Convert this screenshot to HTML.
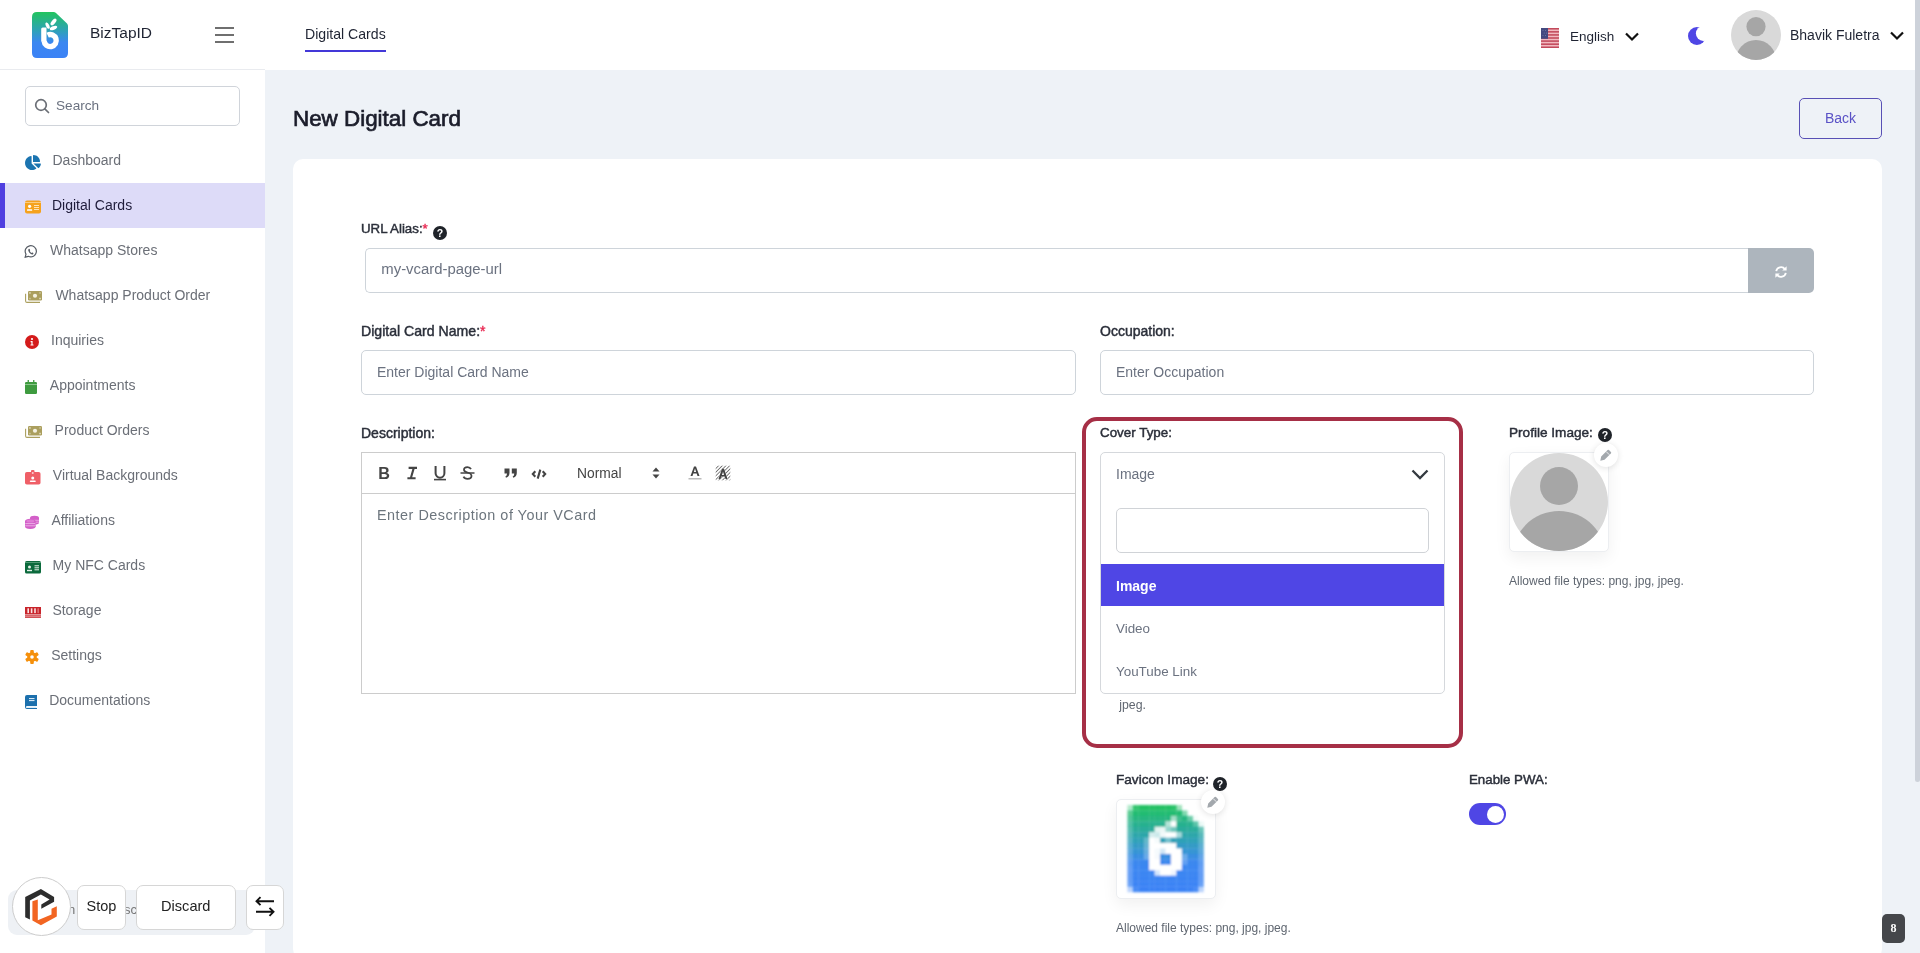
<!DOCTYPE html>
<html><head><meta charset="utf-8">
<style>
*{box-sizing:border-box;margin:0;padding:0}
html,body{width:1920px;height:953px;overflow:hidden;background:#eef2f7;font-family:"Liberation Sans",sans-serif;position:relative}
.a{position:absolute}
.t{position:absolute;line-height:1;white-space:nowrap}
#hdr{left:0;top:0;width:1920px;height:70px;background:#fff}
#side{left:0;top:70px;width:265px;height:883px;background:#fff}
#sideline{left:0;top:69px;width:265px;height:1px;background:#e9ebef}
.nav{font-size:14px;color:#6b6f77}
.lbl{font-size:13.8px;color:#2b2f3a;-webkit-text-stroke:0.45px #2b2f3a}
.inp{position:absolute;background:#fff;border:1px solid #ced4da;border-radius:5px}
.ph{font-size:14px;color:#6b7280}
.q{position:absolute;width:14px;height:14px;border-radius:50%;background:#1f2329}
.q:after{content:"?";position:absolute;left:0;top:1.5px;width:14px;text-align:center;color:#fff;font-weight:bold;font-size:10.5px;line-height:1}
</style></head><body><div id="wrap" style="position:absolute;left:0;top:0;width:1920px;height:953px;will-change:transform;opacity:0.999">
<!-- header -->
<div id="hdr" class="a"></div>
<div id="side" class="a"></div>
<div id="sideline" class="a"></div>

<!-- logo -->
<svg class="a" style="left:32px;top:12px" width="36" height="46" viewBox="0 0 36 46">
<defs><linearGradient id="lg" x1="0" y1="0" x2="0" y2="1"><stop offset="0" stop-color="#22c45e"/><stop offset="0.4" stop-color="#2ea2b6"/><stop offset="0.66" stop-color="#3b87f1"/><stop offset="1" stop-color="#3b82f6"/></linearGradient></defs>
<path d="M5 0H21.5Q23 0 24 1L35 11.5Q36 12.5 36 14V41Q36 46 31 46H5Q0 46 0 41V5Q0 0 5 0Z" fill="url(#lg)"/>
<path d="M15.6 23.1A6.05 6.05 0 1 1 12.15 29" fill="none" stroke="#fff" stroke-width="5.4"/>
<path d="M9.2 17Q9.2 15.5 10.7 15.5H14.5V29.5H9.2Z" fill="#fff"/>
<ellipse cx="15.6" cy="13.6" rx="1.7" ry="3.4" fill="#fff" transform="rotate(-25 15.6 13.6)"/>
<ellipse cx="21.5" cy="10" rx="1.9" ry="4" fill="#fff" transform="rotate(40 21.5 10)"/>
<ellipse cx="21.5" cy="16" rx="1.8" ry="3.9" fill="#fff" transform="rotate(68 21.5 16)"/>
</svg>
<div class="t" style="left:90px;top:24.7px;font-size:15.5px;color:#1f2433">BizTapID</div>
<!-- hamburger -->
<div class="a" style="left:215px;top:27px;width:19px;height:2px;background:#6f6f6f"></div>
<div class="a" style="left:215px;top:34px;width:19px;height:2px;background:#6f6f6f"></div>
<div class="a" style="left:215px;top:41px;width:19px;height:2px;background:#6f6f6f"></div>
<!-- tab -->
<div class="t" style="left:305px;top:26.8px;font-size:14.1px;color:#1f2433">Digital Cards</div>
<div class="a" style="left:305px;top:50px;width:81px;height:2px;background:#4338d8"></div>

<!-- header right -->
<svg class="a" style="left:1541px;top:28px" width="18" height="20" viewBox="0 0 18 20"><rect width="18" height="20" fill="#f1b9c0"/><rect y="0.00" width="18" height="1.54" fill="#c24a5c"/><rect y="3.08" width="18" height="1.54" fill="#c24a5c"/><rect y="6.16" width="18" height="1.54" fill="#c24a5c"/><rect y="9.24" width="18" height="1.54" fill="#c24a5c"/><rect y="12.32" width="18" height="1.54" fill="#c24a5c"/><rect y="15.40" width="18" height="1.54" fill="#c24a5c"/><rect y="18.48" width="18" height="1.54" fill="#c24a5c"/><rect width="7" height="10.8" fill="#444a80"/><g fill="#9aa0c8" opacity=".6"><circle cx="2" cy="2.5" r=".5"/><circle cx="4.5" cy="2.5" r=".5"/><circle cx="3.2" cy="5" r=".5"/><circle cx="5.5" cy="5" r=".5"/><circle cx="2" cy="7.5" r=".5"/><circle cx="4.5" cy="7.5" r=".5"/></g></svg>
<div class="t" style="left:1570px;top:29.6px;font-size:13.5px;color:#1f2433">English</div>
<svg class="a" style="left:1624px;top:31px" width="16" height="11" viewBox="0 0 16 11"><path d="M2 2.5L8 8.5L14 2.5" fill="none" stroke="#111" stroke-width="2.2"/></svg>
<svg class="a" style="left:1686px;top:26px" width="20" height="20" viewBox="0 0 20 20"><mask id="mm"><rect width="20" height="20" fill="#fff"/><circle cx="17.3" cy="7.6" r="7.4" fill="#000"/></mask><circle cx="10.9" cy="10" r="8.9" fill="#4f46e5" mask="url(#mm)"/></svg>
<svg class="a" style="left:1731px;top:10px" width="50" height="50" viewBox="0 0 50 50">
<clipPath id="ac"><circle cx="25" cy="25" r="25"/></clipPath>
<circle cx="25" cy="25" r="25" fill="#d9d9d9"/>
<g clip-path="url(#ac)" fill="#a6a6a6"><circle cx="25" cy="16.6" r="9.6"/><ellipse cx="25" cy="51" rx="20.5" ry="21"/></g>
</svg>
<div class="t" style="left:1790px;top:27.9px;font-size:14px;color:#1f2433">Bhavik Fuletra</div>
<svg class="a" style="left:1889px;top:30px" width="16" height="11" viewBox="0 0 16 11"><path d="M2 2.5L8 8.5L14 2.5" fill="none" stroke="#111" stroke-width="2.2"/></svg>

<!-- scrollbar -->
<div class="a" style="left:1915px;top:0;width:5px;height:782px;background:#cdd2da;border-radius:0 0 3px 3px"></div>

<!-- sidebar search -->
<div class="inp" style="left:25px;top:86px;width:215px;height:40px;border-color:#d0d4da"></div>
<svg class="a" style="left:34px;top:98px" width="16" height="16" viewBox="0 0 16 16"><circle cx="7" cy="7" r="5.3" fill="none" stroke="#6b6f76" stroke-width="1.7"/><path d="M10.8 10.8L14.5 14.5" stroke="#6b6f76" stroke-width="1.7" stroke-linecap="round"/></svg>
<div class="t" style="left:56px;top:99.4px;font-size:13.6px;color:#6b7280">Search</div>

<!-- active item -->
<div class="a" style="left:0;top:183px;width:265px;height:45px;background:#dddbf8"></div>
<div class="a" style="left:0;top:183px;width:5px;height:45px;background:#4f3fe0"></div>

<div class="t nav" style="left:52.5px;top:152.95px">Dashboard</div>
<div class="t nav" style="left:52.0px;top:197.95px;color:#1e1b3a">Digital Cards</div>
<div class="t nav" style="left:50.0px;top:242.95px">Whatsapp Stores</div>
<div class="t nav" style="left:55.4px;top:287.95px">Whatsapp Product Order</div>
<div class="t nav" style="left:51.0px;top:332.95px">Inquiries</div>
<div class="t nav" style="left:49.8px;top:377.95px">Appointments</div>
<div class="t nav" style="left:54.6px;top:422.95px">Product Orders</div>
<div class="t nav" style="left:52.8px;top:467.95px">Virtual Backgrounds</div>
<div class="t nav" style="left:51.4px;top:512.95px">Affiliations</div>
<div class="t nav" style="left:52.6px;top:557.95px">My NFC Cards</div>
<div class="t nav" style="left:52.4px;top:602.95px">Storage</div>
<div class="t nav" style="left:51.2px;top:647.95px">Settings</div>
<div class="t nav" style="left:49.2px;top:692.95px">Documentations</div>
<svg class="a" style="left:25px;top:154.5px" width="16" height="15" viewBox="32 0 544 512"><path d="M304 240V16.6c0-9 7-16.6 16-16.6C443.7 0 544 100.3 544 224c0 9-7.6 16-16.6 16H304zM32 272C32 150.7 122.1 50.3 239 34.3c9.2-1.3 17 6.1 17 15.4V288L412.5 444.5c6.7 6.7 6.2 17.700-1.5 23.1C371.8 495.6 323.8 512 272 512C139.5 512 32 404.6 32 272zm526.4 16c9.3 0 16.6 7.8 15.4 17c-7.7 55.9-34.6 105.6-73.9 142.3c-6 5.6-15.400 5.2-21.2-.7L320 288H558.4z" fill="#1b74b0"/></svg>
<svg class="a" style="left:25px;top:200px" width="16" height="14" viewBox="0 0 16 14"><rect x="0" y="0.5" width="16" height="13" rx="2" fill="#f5a21d"/><rect x="0" y="2.2" width="16" height="0.8" fill="#fcd79a"/><circle cx="4.6" cy="6.3" r="1.6" fill="#fff"/><rect x="2" y="9.2" width="5.2" height="1.6" rx="0.6" fill="#fff"/><rect x="9" y="5" width="5" height="1" fill="#fde3b8"/><rect x="9" y="7" width="5" height="1" fill="#fde3b8"/><rect x="9" y="9" width="5" height="1" fill="#fde3b8"/></svg>
<svg class="a" style="left:23.8px;top:245px" width="13" height="13" viewBox="0 0 13 13"><path d="M1.2 12.2L2 9.2A5.6 5.6 0 1 1 4.3 11.3Z" fill="none" stroke="#555b63" stroke-width="1.2"/><path d="M4.4 4.2Q5 3.4 5.6 4.1L6.1 5Q6.3 5.5 5.8 5.9Q6.4 7.3 7.6 7.9Q8 7.4 8.5 7.6L9.3 8.1Q9.7 8.6 9 9.2Q7.5 10 5.4 7.8Q3.6 5.6 4.4 4.2Z" fill="#555b63"/></svg>
<svg class="a" style="left:25px;top:291px" width="17" height="12" viewBox="0 0 17 12"><rect x="3" y="0" width="14" height="9.5" rx="1.2" fill="#ab9f5e"/><circle cx="10" cy="4.75" r="2.1" fill="#f4f1e2"/><rect x="4.2" y="1.2" width="1.5" height="1.5" fill="#f4f1e2" opacity=".8"/><rect x="14.3" y="6.8" width="1.5" height="1.5" fill="#f4f1e2" opacity=".8"/><rect x="14.3" y="1.2" width="1.5" height="1.5" fill="#f4f1e2" opacity=".5"/><rect x="4.2" y="6.8" width="1.5" height="1.5" fill="#f4f1e2" opacity=".5"/><path d="M0.6 2.8V10Q0.6 11.4 2 11.4H15" fill="none" stroke="#ab9f5e" stroke-width="1.1"/></svg>
<svg class="a" style="left:25px;top:335px" width="14" height="14" viewBox="0 0 14 14"><circle cx="7" cy="7" r="7" fill="#d41b1b"/><circle cx="7" cy="4" r="1.1" fill="#fff"/><path d="M5.6 6H7.6V9.4H8.5V10.6H5.5V9.4H6.4V7.2H5.6Z" fill="#fff"/></svg>
<svg class="a" style="left:25px;top:380px" width="12" height="14" viewBox="0 0 12 14"><rect x="0" y="2" width="12" height="12" rx="1.2" fill="#3e9b3f"/><rect x="2.6" y="0" width="1.3" height="3" fill="#3e9b3f"/><rect x="8.1" y="0" width="1.3" height="3" fill="#3e9b3f"/><rect x="0" y="4.2" width="12" height="0.8" fill="#9ed29e"/></svg>
<svg class="a" style="left:25px;top:426px" width="17" height="12" viewBox="0 0 17 12"><rect x="3" y="0" width="14" height="9.5" rx="1.2" fill="#ab9f5e"/><circle cx="10" cy="4.75" r="2.1" fill="#f4f1e2"/><rect x="4.2" y="1.2" width="1.5" height="1.5" fill="#f4f1e2" opacity=".8"/><rect x="14.3" y="6.8" width="1.5" height="1.5" fill="#f4f1e2" opacity=".8"/><rect x="14.3" y="1.2" width="1.5" height="1.5" fill="#f4f1e2" opacity=".5"/><rect x="4.2" y="6.8" width="1.5" height="1.5" fill="#f4f1e2" opacity=".5"/><path d="M0.6 2.8V10Q0.6 11.4 2 11.4H15" fill="none" stroke="#ab9f5e" stroke-width="1.1"/></svg>
<svg class="a" style="left:25px;top:469.5px" width="16" height="15" viewBox="0 0 16 15"><rect x="0" y="2" width="15.5" height="12.5" rx="1.8" fill="#ef5f67"/><rect x="6" y="0" width="3.5" height="4" rx="1" fill="#ef5f67"/><circle cx="7.75" cy="3" r="1" fill="#fbd0d3"/><circle cx="7.75" cy="8" r="1.5" fill="#fff"/><rect x="4.8" y="10.5" width="6" height="1.6" rx="0.8" fill="#fff"/></svg>
<svg class="a" style="left:25px;top:514.5px" width="15" height="14" viewBox="0 0 15 14"><g fill="#d35fc8"><ellipse cx="9.5" cy="3" rx="4.5" ry="2.3"/><rect x="5" y="3" width="9" height="4.5"/><ellipse cx="9.5" cy="7.5" rx="4.5" ry="2"/></g><path d="M6 5.3H14M6 7.2H14" stroke="#f7d0f2" stroke-width=".6"/><g fill="#d35fc8"><ellipse cx="5.3" cy="6.2" rx="5.3" ry="2.5"/><rect x="0" y="6.2" width="10.6" height="5.5"/><ellipse cx="5.3" cy="11.6" rx="5.3" ry="2.3"/></g><path d="M0.3 8.6H10.3M0.3 10.8H10.3" stroke="#f7d0f2" stroke-width=".7"/><ellipse cx="5.3" cy="6" rx="4" ry="1.6" fill="#e07bd6"/></svg>
<svg class="a" style="left:25px;top:560.5px" width="16" height="13" viewBox="0 0 16 13"><rect x="0" y="0" width="16" height="12.5" rx="1.6" fill="#0b6a3c"/><rect x="0" y="1.3" width="16" height=".7" fill="#6fb08e"/><circle cx="4.5" cy="6" r="1.5" fill="#e6f2ea"/><rect x="2" y="8.8" width="5" height="1.4" fill="#e6f2ea"/><rect x="9.5" y="4.3" width="4.5" height="1" fill="#e6f2ea"/><rect x="9.5" y="6.3" width="4.5" height="1" fill="#e6f2ea"/><rect x="9.5" y="8.3" width="4.5" height="1" fill="#e6f2ea"/></svg>
<svg class="a" style="left:25px;top:606.5px" width="16" height="11" viewBox="0 0 16 11"><rect x="0" y="0" width="16" height="7.5" fill="#c8242b"/><rect x="0" y="8.3" width="16" height="1.2" fill="#c8242b"/><rect x="0" y="9.8" width="16" height="1.2" fill="#c8242b" opacity=".8"/><rect x="2.4" y="1.3" width="1.6" height="4.8" fill="#fbe3e3"/><rect x="5.8" y="1.3" width="1.6" height="4.8" fill="#fbe3e3"/><rect x="9.2" y="1.3" width="1.6" height="4.8" fill="#fbe3e3"/><rect x="12.4" y="1.3" width="1.6" height="4.8" fill="#fbe3e3" opacity=".4"/></svg>
<svg class="a" style="left:25px;top:650px" width="14" height="14" viewBox="0 0 14 14"><g fill="#f5900c" transform="translate(7 7)"><rect x="-1.8" y="-7" width="3.6" height="4" rx="1" transform="rotate(0)"/><rect x="-1.8" y="-7" width="3.6" height="4" rx="1" transform="rotate(60)"/><rect x="-1.8" y="-7" width="3.6" height="4" rx="1" transform="rotate(120)"/><rect x="-1.8" y="-7" width="3.6" height="4" rx="1" transform="rotate(180)"/><rect x="-1.8" y="-7" width="3.6" height="4" rx="1" transform="rotate(240)"/><rect x="-1.8" y="-7" width="3.6" height="4" rx="1" transform="rotate(300)"/><circle r="4.8"/></g><circle cx="7" cy="7" r="1.8" fill="#fff"/></svg>
<svg class="a" style="left:25px;top:695px" width="12" height="14" viewBox="0 0 12 14"><path d="M2 0H12V11H2.2Q1 11 1 12.2Q1 13 2 13H12V14H2Q0 14 0 12V2Q0 0 2 0Z" fill="#1c70ad"/><rect x="4" y="3" width="5.5" height="1.1" fill="#d6e8f5"/><rect x="4" y="5" width="5.5" height="1.1" fill="#d6e8f5"/><rect x="1.5" y="11.6" width="10" height="1.2" fill="#d6e8f5"/></svg>

<!-- page title -->
<div class="t" style="left:293px;top:108.2px;font-size:22.4px;color:#1b1d2b;-webkit-text-stroke:0.7px #1b1d2b">New Digital Card</div>
<div class="a" style="left:1799px;top:98px;width:83px;height:41px;border:1.5px solid #5850b5;border-radius:5px"></div>
<div class="t" style="left:1825px;top:111.4px;font-size:14px;color:#5a52c6">Back</div>

<!-- card -->
<div class="a" style="left:293px;top:159px;width:1589px;height:800px;background:#fff;border-radius:10px"></div>

<!-- URL alias -->
<div class="t lbl" style="left:361px;top:222.1px;font-size:13.3px">URL Alias:<span style="color:#e8254f;-webkit-text-stroke:0.35px #e8254f">*</span></div>
<div class="q" style="left:433px;top:226px"></div>
<div class="inp" style="left:365px;top:248px;width:1385px;height:45px;border-radius:5px 0 0 5px;border-right:none"></div>
<div class="t ph" style="left:381.3px;top:262.2px;font-size:14.9px">my-vcard-page-url</div>
<div class="a" style="left:1748px;top:248px;width:66px;height:45px;background:#adb5bd;border-radius:0 5px 5px 0"></div>
<svg class="a" style="left:1774px;top:265px" width="14" height="14" viewBox="0 0 14 14"><path d="M2.2 6.2A4.9 4.9 0 0 1 11 4.2" fill="none" stroke="#fff" stroke-width="1.8"/><path d="M12.6 1.2V5.6H8.2Z" fill="#fff"/><path d="M11.8 7.8A4.9 4.9 0 0 1 3 9.8" fill="none" stroke="#fff" stroke-width="1.8"/><path d="M1.4 12.8V8.4H5.8Z" fill="#fff"/></svg>

<!-- name / occupation -->
<div class="t lbl" style="left:361px;top:323.5px;font-size:14.1px">Digital Card Name:<span style="color:#e8254f;-webkit-text-stroke:0.35px #e8254f">*</span></div>
<div class="inp" style="left:361px;top:350px;width:715px;height:45px"></div>
<div class="t ph" style="left:377px;top:365.2px">Enter Digital Card Name</div>
<div class="t lbl" style="left:1100px;top:323.9px;font-size:14px">Occupation:</div>
<div class="inp" style="left:1100px;top:350px;width:714px;height:45px"></div>
<div class="t ph" style="left:1116px;top:365.2px">Enter Occupation</div>

<!-- description -->
<div class="t lbl" style="left:361px;top:426.1px;font-size:14px">Description:</div>
<div class="a" style="left:361px;top:452px;width:715px;height:242px;border:1px solid #ccc"></div>
<div class="a" style="left:362px;top:493px;width:713px;height:1px;background:#ccc"></div>
<!-- toolbar icons -->
<div class="t" style="left:378.3px;top:465.3px;font-size:16.2px;font-weight:bold;color:#444">B</div>
<svg class="a" style="left:405px;top:466px" width="13" height="14" viewBox="0 0 13 14"><path d="M3.6 1.9H12M2.4 12.2H10.6M8.8 1.9L5.8 12.2" fill="none" stroke="#444" stroke-width="2.1"/></svg>
<svg class="a" style="left:433px;top:465px" width="14" height="16" viewBox="0 0 14 16"><path d="M2.6 1V8.3A4.4 4.4 0 0 0 11.4 8.3V1" fill="none" stroke="#444" stroke-width="2"/><path d="M1 14.6H13" stroke="#444" stroke-width="1.6"/></svg>
<svg class="a" style="left:460px;top:466px" width="15" height="14" viewBox="0 0 15 14"><path d="M11 3.2Q10 1.2 7.5 1.2Q4 1.2 4 3.8Q4 5.6 7.5 6.5Q11.5 7.5 11.5 10Q11.5 12.8 7.5 12.8Q4.5 12.8 3.5 10.6" fill="none" stroke="#444" stroke-width="1.8"/><path d="M0.5 7H14.5" stroke="#444" stroke-width="1.5"/></svg>
<svg class="a" style="left:504px;top:468px" width="14" height="10" viewBox="0 0 14 10"><path d="M0.5 0.5H5.5V5Q5.5 8.5 2 9.8L1.4 8.6Q3 7.8 3 5.5H0.5Z" fill="#444"/><path d="M7.8 0.5H12.8V5Q12.8 8.5 9.3 9.8L8.7 8.6Q10.3 7.8 10.3 5.5H7.8Z" fill="#444"/></svg>
<svg class="a" style="left:531px;top:469px" width="16" height="10" viewBox="0 0 16 10"><path d="M4.3 2.2L1.8 5L4.3 7.8M11.7 2.2L14.2 5L11.7 7.8M9.3 0.6L6.7 9.6" fill="none" stroke="#444" stroke-width="2.1"/></svg>
<div class="t" style="left:577px;top:467.3px;font-size:13.8px;color:#444">Normal</div>
<svg class="a" style="left:652px;top:467px" width="8" height="12" viewBox="0 0 8 12"><path d="M4 0.5L7.5 4.5H0.5Z M4 11.5L7.5 7.5H0.5Z" fill="#444"/></svg>
<svg class="a" style="left:687px;top:465px" width="16" height="16" viewBox="0 0 16 16"><path d="M3.5 11L7 1.5H9L12.5 11H10.5L9.7 8.6H6.3L5.5 11Z M6.9 6.9H9.1L8 3.6Z" fill="#444"/><rect x="1.5" y="13" width="13" height="1.5" fill="#bbb"/></svg>
<svg class="a" style="left:715px;top:465px" width="16" height="16" viewBox="0 0 16 16"><defs><pattern id="hp" width="2.6" height="2.6" patternUnits="userSpaceOnUse" patternTransform="rotate(45)"><rect width="0.8" height="2.6" fill="#666"/></pattern></defs><rect x="0.7" y="0.7" width="14.6" height="14.6" fill="url(#hp)"/><path d="M3.5 14L7 3.5H9L12.5 14H10.5L9.7 11.6H6.3L5.5 14Z M6.9 9.9H9.1L8 6.6Z" fill="#444" stroke="#fff" stroke-width="0.6" paint-order="stroke"/></svg>
<div class="t" style="left:377px;top:507.8px;font-size:14.4px;color:#6c757d;letter-spacing:0.5px">Enter Description of Your VCard</div>

<!-- cover type highlight -->
<div class="a" style="left:1082px;top:417px;width:381px;height:331px;border:4px solid #a62f46;border-radius:15px"></div>
<div class="t lbl" style="left:1100px;top:425.9px;font-size:13.4px">Cover Type:</div>
<div class="a" style="left:1100px;top:452px;width:345px;height:242px;border:1px solid #d5d8dc;border-radius:5px;background:#fff"></div>
<div class="t ph" style="left:1116px;top:466.9px">Image</div>
<svg class="a" style="left:1410px;top:468px" width="20" height="13" viewBox="0 0 20 13"><path d="M2.5 2.5L10 10L17.5 2.5" fill="none" stroke="#343a40" stroke-width="2.3"/></svg>
<div class="a" style="left:1116px;top:508px;width:313px;height:45px;border:1px solid #d0d3d7;border-radius:5px"></div>
<div class="a" style="left:1101px;top:564px;width:343px;height:42px;background:#4f46e5"></div>
<div class="t" style="left:1116px;top:578.5px;font-size:14px;font-weight:bold;color:#fff">Image</div>
<div class="t ph" style="left:1116px;top:621.6px;font-size:13.4px">Video</div>
<div class="t ph" style="left:1116px;top:664.7px;font-size:13.4px">YouTube Link</div>
<div class="t" style="left:1119.3px;top:699.4px;font-size:12.3px;color:#5f6670">jpeg.</div>

<!-- profile image -->
<div class="t lbl" style="left:1509px;top:426.1px;font-size:13.6px">Profile Image:</div>
<div class="q" style="left:1598px;top:428px"></div>
<div class="a" style="left:1509px;top:452px;width:100px;height:100px;border:1px solid #eceef1;border-radius:5px;box-shadow:0 6px 16px rgba(0,0,0,0.06);background:#fff"></div>
<svg class="a" style="left:1510px;top:453px" width="98" height="98" viewBox="0 0 98 98"><clipPath id="pc"><circle cx="49" cy="49" r="49"/></clipPath><circle cx="49" cy="49" r="49" fill="#d9d9d9"/><g clip-path="url(#pc)" fill="#a6a6a6"><circle cx="49" cy="33" r="19"/><ellipse cx="49" cy="105" rx="47" ry="47"/></g></svg>
<div class="a" style="left:1594px;top:443px;width:24px;height:24px;border-radius:50%;background:#fff;box-shadow:0 1px 6px rgba(0,0,0,0.12)"></div>
<svg class="a" style="left:1599px;top:448px" width="14" height="14" viewBox="0 0 14 14"><path d="M1.3 12.7L2.2 8.5L8.6 2.1Q9.3 1.4 10 2.1L11.9 4Q12.6 4.7 11.9 5.4L5.5 11.8Z" fill="#a3a8ad"/><path d="M7.2 3.6L10.4 6.8" stroke="#fff" stroke-width="0.8"/></svg>
<div class="t" style="left:1509px;top:575.2px;font-size:12px;color:#5f6670">Allowed file types: png, jpg, jpeg.</div>

<!-- favicon -->
<div class="t lbl" style="left:1116px;top:772.9px;font-size:13.6px">Favicon Image:</div>
<div class="q" style="left:1213px;top:777px"></div>
<div class="a" style="left:1116px;top:799px;width:100px;height:100px;border:1px solid #eceef1;border-radius:5px;box-shadow:0 6px 16px rgba(0,0,0,0.06);background:#fff"></div>
<!--FAVS--><svg class="a" style="left:1122.4px;top:805.3px;overflow:visible" width="87" height="87" viewBox="0 0 87 87"><filter id="fb" x="-10%" y="-10%" width="120%" height="120%"><feGaussianBlur stdDeviation="0.8"/></filter><g filter="url(#fb)"><rect x="5.44" y="0.00" width="5.69" height="5.69" fill="#23c067" fill-opacity="0.35"/><rect x="10.88" y="0.00" width="5.69" height="5.69" fill="#22c164" fill-opacity="0.93"/><rect x="16.31" y="0.00" width="5.69" height="5.69" fill="#22c164"/><rect x="21.75" y="0.00" width="5.69" height="5.69" fill="#22c164"/><rect x="27.19" y="0.00" width="5.69" height="5.69" fill="#22c164"/><rect x="32.62" y="0.00" width="5.69" height="5.69" fill="#22c164"/><rect x="38.06" y="0.00" width="5.69" height="5.69" fill="#22c164"/><rect x="43.50" y="0.00" width="5.69" height="5.69" fill="#22c164"/><rect x="48.94" y="0.00" width="5.69" height="5.69" fill="#22c164" fill-opacity="0.97"/><rect x="54.38" y="0.00" width="5.69" height="5.69" fill="#23c067" fill-opacity="0.44"/><rect x="5.44" y="5.44" width="5.69" height="5.69" fill="#24bc72" fill-opacity="0.77"/><rect x="10.88" y="5.44" width="5.69" height="5.69" fill="#24bc72"/><rect x="16.31" y="5.44" width="5.69" height="5.69" fill="#24bc72"/><rect x="21.75" y="5.44" width="5.69" height="5.69" fill="#24bc72"/><rect x="27.19" y="5.44" width="5.69" height="5.69" fill="#24bc72"/><rect x="32.62" y="5.44" width="5.69" height="5.69" fill="#24bc72"/><rect x="38.06" y="5.44" width="5.69" height="5.69" fill="#24bc72"/><rect x="43.50" y="5.44" width="5.69" height="5.69" fill="#24bc72"/><rect x="48.94" y="5.44" width="5.69" height="5.69" fill="#24bc72"/><rect x="54.38" y="5.44" width="5.69" height="5.69" fill="#24bc72"/><rect x="59.81" y="5.44" width="5.69" height="5.69" fill="#24bc72" fill-opacity="0.57"/><rect x="5.44" y="10.88" width="5.69" height="5.69" fill="#26b680" fill-opacity="0.80"/><rect x="10.88" y="10.88" width="5.69" height="5.69" fill="#26b680"/><rect x="16.31" y="10.88" width="5.69" height="5.69" fill="#26b680"/><rect x="21.75" y="10.88" width="5.69" height="5.69" fill="#26b680"/><rect x="27.19" y="10.88" width="5.69" height="5.69" fill="#26b680"/><rect x="32.62" y="10.88" width="5.69" height="5.69" fill="#26b680"/><rect x="38.06" y="10.88" width="5.69" height="5.69" fill="#26b680"/><rect x="43.50" y="10.88" width="5.69" height="5.69" fill="#26b680"/><rect x="48.94" y="10.88" width="5.69" height="5.69" fill="#a1dfc8"/><rect x="54.38" y="10.88" width="5.69" height="5.69" fill="#3fbe8e"/><rect x="59.81" y="10.88" width="5.69" height="5.69" fill="#26b680"/><rect x="65.25" y="10.88" width="5.69" height="5.69" fill="#26b680" fill-opacity="0.68"/><rect x="70.69" y="10.88" width="5.69" height="5.69" fill="#27b486" fill-opacity="0.04"/><rect x="5.44" y="16.31" width="5.69" height="5.69" fill="#28b18e" fill-opacity="0.80"/><rect x="10.88" y="16.31" width="5.69" height="5.69" fill="#28b18e"/><rect x="16.31" y="16.31" width="5.69" height="5.69" fill="#28b18e"/><rect x="21.75" y="16.31" width="5.69" height="5.69" fill="#28b18e"/><rect x="27.19" y="16.31" width="5.69" height="5.69" fill="#28b18e"/><rect x="32.62" y="16.31" width="5.69" height="5.69" fill="#2cb290"/><rect x="38.06" y="16.31" width="5.69" height="5.69" fill="#28b18e"/><rect x="43.50" y="16.31" width="5.69" height="5.69" fill="#b6e4d8"/><rect x="48.94" y="16.31" width="5.69" height="5.69" fill="#ffffff"/><rect x="54.38" y="16.31" width="5.69" height="5.69" fill="#28b18e"/><rect x="59.81" y="16.31" width="5.69" height="5.69" fill="#28b18e"/><rect x="65.25" y="16.31" width="5.69" height="5.69" fill="#28b18e"/><rect x="70.69" y="16.31" width="5.69" height="5.69" fill="#28b18e" fill-opacity="0.77"/><rect x="76.12" y="16.31" width="5.69" height="5.69" fill="#29af93" fill-opacity="0.08"/><rect x="5.44" y="21.75" width="5.69" height="5.69" fill="#2aac9b" fill-opacity="0.80"/><rect x="10.88" y="21.75" width="5.69" height="5.69" fill="#2aac9b"/><rect x="16.31" y="21.75" width="5.69" height="5.69" fill="#2aac9b"/><rect x="21.75" y="21.75" width="5.69" height="5.69" fill="#2aac9b"/><rect x="27.19" y="21.75" width="5.69" height="5.69" fill="#2aac9b"/><rect x="32.62" y="21.75" width="5.69" height="5.69" fill="#e4f4f2"/><rect x="38.06" y="21.75" width="5.69" height="5.69" fill="#ecf7f6"/><rect x="43.50" y="21.75" width="5.69" height="5.69" fill="#96d6ce"/><rect x="48.94" y="21.75" width="5.69" height="5.69" fill="#71c7bd"/><rect x="54.38" y="21.75" width="5.69" height="5.69" fill="#2aac9b"/><rect x="59.81" y="21.75" width="5.69" height="5.69" fill="#2aac9b"/><rect x="65.25" y="21.75" width="5.69" height="5.69" fill="#2aac9b"/><rect x="70.69" y="21.75" width="5.69" height="5.69" fill="#2aac9b"/><rect x="76.12" y="21.75" width="5.69" height="5.69" fill="#2aac9b" fill-opacity="0.70"/><rect x="5.44" y="27.19" width="5.69" height="5.69" fill="#2ca6a9" fill-opacity="0.80"/><rect x="10.88" y="27.19" width="5.69" height="5.69" fill="#2ca6a9"/><rect x="16.31" y="27.19" width="5.69" height="5.69" fill="#2ca6a9"/><rect x="21.75" y="27.19" width="5.69" height="5.69" fill="#2ca6a9"/><rect x="27.19" y="27.19" width="5.69" height="5.69" fill="#d5edee"/><rect x="32.62" y="27.19" width="5.69" height="5.69" fill="#cbe9ea"/><rect x="38.06" y="27.19" width="5.69" height="5.69" fill="#f2f9fa"/><rect x="43.50" y="27.19" width="5.69" height="5.69" fill="#ffffff"/><rect x="48.94" y="27.19" width="5.69" height="5.69" fill="#ffffff"/><rect x="54.38" y="27.19" width="5.69" height="5.69" fill="#a4d9da"/><rect x="59.81" y="27.19" width="5.69" height="5.69" fill="#2ca6a9"/><rect x="65.25" y="27.19" width="5.69" height="5.69" fill="#2ca6a9"/><rect x="70.69" y="27.19" width="5.69" height="5.69" fill="#2ca6a9"/><rect x="76.12" y="27.19" width="5.69" height="5.69" fill="#2ca6a9" fill-opacity="0.80"/><rect x="5.44" y="32.62" width="5.69" height="5.69" fill="#2ea1b7" fill-opacity="0.80"/><rect x="10.88" y="32.62" width="5.69" height="5.69" fill="#2ea1b7"/><rect x="16.31" y="32.62" width="5.69" height="5.69" fill="#2ea1b7"/><rect x="21.75" y="32.62" width="5.69" height="5.69" fill="#62b8c9"/><rect x="27.19" y="32.62" width="5.69" height="5.69" fill="#ffffff"/><rect x="32.62" y="32.62" width="5.69" height="5.69" fill="#f5fafb"/><rect x="38.06" y="32.62" width="5.69" height="5.69" fill="#2ea1b7"/><rect x="43.50" y="32.62" width="5.69" height="5.69" fill="#75c1cf"/><rect x="48.94" y="32.62" width="5.69" height="5.69" fill="#2ea1b7"/><rect x="54.38" y="32.62" width="5.69" height="5.69" fill="#2ea1b7"/><rect x="59.81" y="32.62" width="5.69" height="5.69" fill="#2ea1b7"/><rect x="65.25" y="32.62" width="5.69" height="5.69" fill="#2ea1b7"/><rect x="70.69" y="32.62" width="5.69" height="5.69" fill="#2ea1b7"/><rect x="76.12" y="32.62" width="5.69" height="5.69" fill="#2ea1b7" fill-opacity="0.80"/><rect x="5.44" y="38.06" width="5.69" height="5.69" fill="#319ac5" fill-opacity="0.80"/><rect x="10.88" y="38.06" width="5.69" height="5.69" fill="#319ac5"/><rect x="16.31" y="38.06" width="5.69" height="5.69" fill="#319ac5"/><rect x="21.75" y="38.06" width="5.69" height="5.69" fill="#64b3d3"/><rect x="27.19" y="38.06" width="5.69" height="5.69" fill="#ffffff"/><rect x="32.62" y="38.06" width="5.69" height="5.69" fill="#ffffff"/><rect x="38.06" y="38.06" width="5.69" height="5.69" fill="#ffffff"/><rect x="43.50" y="38.06" width="5.69" height="5.69" fill="#ffffff"/><rect x="48.94" y="38.06" width="5.69" height="5.69" fill="#ffffff"/><rect x="54.38" y="38.06" width="5.69" height="5.69" fill="#319ac5"/><rect x="59.81" y="38.06" width="5.69" height="5.69" fill="#319ac5"/><rect x="65.25" y="38.06" width="5.69" height="5.69" fill="#319ac5"/><rect x="70.69" y="38.06" width="5.69" height="5.69" fill="#319ac5"/><rect x="76.12" y="38.06" width="5.69" height="5.69" fill="#319ac5" fill-opacity="0.80"/><rect x="5.44" y="43.50" width="5.69" height="5.69" fill="#3494d3" fill-opacity="0.80"/><rect x="10.88" y="43.50" width="5.69" height="5.69" fill="#3494d3"/><rect x="16.31" y="43.50" width="5.69" height="5.69" fill="#3494d3"/><rect x="21.75" y="43.50" width="5.69" height="5.69" fill="#66aede"/><rect x="27.19" y="43.50" width="5.69" height="5.69" fill="#ffffff"/><rect x="32.62" y="43.50" width="5.69" height="5.69" fill="#f5fafd"/><rect x="38.06" y="43.50" width="5.69" height="5.69" fill="#d1e6f5"/><rect x="43.50" y="43.50" width="5.69" height="5.69" fill="#ffffff"/><rect x="48.94" y="43.50" width="5.69" height="5.69" fill="#ffffff"/><rect x="54.38" y="43.50" width="5.69" height="5.69" fill="#ffffff"/><rect x="59.81" y="43.50" width="5.69" height="5.69" fill="#3494d3"/><rect x="65.25" y="43.50" width="5.69" height="5.69" fill="#3494d3"/><rect x="70.69" y="43.50" width="5.69" height="5.69" fill="#3494d3"/><rect x="76.12" y="43.50" width="5.69" height="5.69" fill="#3494d3" fill-opacity="0.80"/><rect x="5.44" y="48.94" width="5.69" height="5.69" fill="#378de1" fill-opacity="0.80"/><rect x="10.88" y="48.94" width="5.69" height="5.69" fill="#378de1"/><rect x="16.31" y="48.94" width="5.69" height="5.69" fill="#378de1"/><rect x="21.75" y="48.94" width="5.69" height="5.69" fill="#69aae9"/><rect x="27.19" y="48.94" width="5.69" height="5.69" fill="#ffffff"/><rect x="32.62" y="48.94" width="5.69" height="5.69" fill="#f6f9fd"/><rect x="38.06" y="48.94" width="5.69" height="5.69" fill="#378de1"/><rect x="43.50" y="48.94" width="5.69" height="5.69" fill="#378de1"/><rect x="48.94" y="48.94" width="5.69" height="5.69" fill="#ffffff"/><rect x="54.38" y="48.94" width="5.69" height="5.69" fill="#ffffff"/><rect x="59.81" y="48.94" width="5.69" height="5.69" fill="#69aae9"/><rect x="65.25" y="48.94" width="5.69" height="5.69" fill="#378de1"/><rect x="70.69" y="48.94" width="5.69" height="5.69" fill="#378de1"/><rect x="76.12" y="48.94" width="5.69" height="5.69" fill="#378de1" fill-opacity="0.80"/><rect x="5.44" y="54.38" width="5.69" height="5.69" fill="#3a87ee" fill-opacity="0.80"/><rect x="10.88" y="54.38" width="5.69" height="5.69" fill="#3a87ee"/><rect x="16.31" y="54.38" width="5.69" height="5.69" fill="#3a87ee"/><rect x="21.75" y="54.38" width="5.69" height="5.69" fill="#3a87ee"/><rect x="27.19" y="54.38" width="5.69" height="5.69" fill="#ffffff"/><rect x="32.62" y="54.38" width="5.69" height="5.69" fill="#ffffff"/><rect x="38.06" y="54.38" width="5.69" height="5.69" fill="#3a87ee"/><rect x="43.50" y="54.38" width="5.69" height="5.69" fill="#3a87ee"/><rect x="48.94" y="54.38" width="5.69" height="5.69" fill="#ffffff"/><rect x="54.38" y="54.38" width="5.69" height="5.69" fill="#ffffff"/><rect x="59.81" y="54.38" width="5.69" height="5.69" fill="#62a0f2"/><rect x="65.25" y="54.38" width="5.69" height="5.69" fill="#3a87ee"/><rect x="70.69" y="54.38" width="5.69" height="5.69" fill="#3a87ee"/><rect x="76.12" y="54.38" width="5.69" height="5.69" fill="#3a87ee" fill-opacity="0.80"/><rect x="5.44" y="59.81" width="5.69" height="5.69" fill="#3b86f1" fill-opacity="0.80"/><rect x="10.88" y="59.81" width="5.69" height="5.69" fill="#3b86f1"/><rect x="16.31" y="59.81" width="5.69" height="5.69" fill="#3b86f1"/><rect x="21.75" y="59.81" width="5.69" height="5.69" fill="#3b86f1"/><rect x="27.19" y="59.81" width="5.69" height="5.69" fill="#ffffff"/><rect x="32.62" y="59.81" width="5.69" height="5.69" fill="#ffffff"/><rect x="38.06" y="59.81" width="5.69" height="5.69" fill="#ffffff"/><rect x="43.50" y="59.81" width="5.69" height="5.69" fill="#ffffff"/><rect x="48.94" y="59.81" width="5.69" height="5.69" fill="#ffffff"/><rect x="54.38" y="59.81" width="5.69" height="5.69" fill="#ffffff"/><rect x="59.81" y="59.81" width="5.69" height="5.69" fill="#3b86f1"/><rect x="65.25" y="59.81" width="5.69" height="5.69" fill="#3b86f1"/><rect x="70.69" y="59.81" width="5.69" height="5.69" fill="#3b86f1"/><rect x="76.12" y="59.81" width="5.69" height="5.69" fill="#3b86f1" fill-opacity="0.80"/><rect x="5.44" y="65.25" width="5.69" height="5.69" fill="#3b85f2" fill-opacity="0.80"/><rect x="10.88" y="65.25" width="5.69" height="5.69" fill="#3b85f2"/><rect x="16.31" y="65.25" width="5.69" height="5.69" fill="#3b85f2"/><rect x="21.75" y="65.25" width="5.69" height="5.69" fill="#3b85f2"/><rect x="27.19" y="65.25" width="5.69" height="5.69" fill="#3b85f2"/><rect x="32.62" y="65.25" width="5.69" height="5.69" fill="#d6e6fc"/><rect x="38.06" y="65.25" width="5.69" height="5.69" fill="#ffffff"/><rect x="43.50" y="65.25" width="5.69" height="5.69" fill="#ffffff"/><rect x="48.94" y="65.25" width="5.69" height="5.69" fill="#f1f6fe"/><rect x="54.38" y="65.25" width="5.69" height="5.69" fill="#3b85f2"/><rect x="59.81" y="65.25" width="5.69" height="5.69" fill="#3b85f2"/><rect x="65.25" y="65.25" width="5.69" height="5.69" fill="#3b85f2"/><rect x="70.69" y="65.25" width="5.69" height="5.69" fill="#3b85f2"/><rect x="76.12" y="65.25" width="5.69" height="5.69" fill="#3b85f2" fill-opacity="0.80"/><rect x="5.44" y="70.69" width="5.69" height="5.69" fill="#3b84f3" fill-opacity="0.80"/><rect x="10.88" y="70.69" width="5.69" height="5.69" fill="#3b84f3"/><rect x="16.31" y="70.69" width="5.69" height="5.69" fill="#3b84f3"/><rect x="21.75" y="70.69" width="5.69" height="5.69" fill="#3b84f3"/><rect x="27.19" y="70.69" width="5.69" height="5.69" fill="#3b84f3"/><rect x="32.62" y="70.69" width="5.69" height="5.69" fill="#3b84f3"/><rect x="38.06" y="70.69" width="5.69" height="5.69" fill="#3b84f3"/><rect x="43.50" y="70.69" width="5.69" height="5.69" fill="#3b84f3"/><rect x="48.94" y="70.69" width="5.69" height="5.69" fill="#3b84f3"/><rect x="54.38" y="70.69" width="5.69" height="5.69" fill="#3b84f3"/><rect x="59.81" y="70.69" width="5.69" height="5.69" fill="#3b84f3"/><rect x="65.25" y="70.69" width="5.69" height="5.69" fill="#3b84f3"/><rect x="70.69" y="70.69" width="5.69" height="5.69" fill="#3b84f3"/><rect x="76.12" y="70.69" width="5.69" height="5.69" fill="#3b84f3" fill-opacity="0.80"/><rect x="5.44" y="76.12" width="5.69" height="5.69" fill="#3b83f4" fill-opacity="0.77"/><rect x="10.88" y="76.12" width="5.69" height="5.69" fill="#3b83f4"/><rect x="16.31" y="76.12" width="5.69" height="5.69" fill="#3b83f4"/><rect x="21.75" y="76.12" width="5.69" height="5.69" fill="#3b83f4"/><rect x="27.19" y="76.12" width="5.69" height="5.69" fill="#3b83f4"/><rect x="32.62" y="76.12" width="5.69" height="5.69" fill="#3b83f4"/><rect x="38.06" y="76.12" width="5.69" height="5.69" fill="#3b83f4"/><rect x="43.50" y="76.12" width="5.69" height="5.69" fill="#3b83f4"/><rect x="48.94" y="76.12" width="5.69" height="5.69" fill="#3b83f4"/><rect x="54.38" y="76.12" width="5.69" height="5.69" fill="#3b83f4"/><rect x="59.81" y="76.12" width="5.69" height="5.69" fill="#3b83f4"/><rect x="65.25" y="76.12" width="5.69" height="5.69" fill="#3b83f4"/><rect x="70.69" y="76.12" width="5.69" height="5.69" fill="#3b83f4"/><rect x="76.12" y="76.12" width="5.69" height="5.69" fill="#3a83f4" fill-opacity="0.77"/><rect x="5.44" y="81.56" width="5.69" height="5.69" fill="#3a82f5" fill-opacity="0.35"/><rect x="10.88" y="81.56" width="5.69" height="5.69" fill="#3b82f5" fill-opacity="0.93"/><rect x="16.31" y="81.56" width="5.69" height="5.69" fill="#3b82f5"/><rect x="21.75" y="81.56" width="5.69" height="5.69" fill="#3b82f5"/><rect x="27.19" y="81.56" width="5.69" height="5.69" fill="#3b82f5"/><rect x="32.62" y="81.56" width="5.69" height="5.69" fill="#3b82f5"/><rect x="38.06" y="81.56" width="5.69" height="5.69" fill="#3b82f5"/><rect x="43.50" y="81.56" width="5.69" height="5.69" fill="#3b82f5"/><rect x="48.94" y="81.56" width="5.69" height="5.69" fill="#3b82f5"/><rect x="54.38" y="81.56" width="5.69" height="5.69" fill="#3b82f5"/><rect x="59.81" y="81.56" width="5.69" height="5.69" fill="#3b82f5"/><rect x="65.25" y="81.56" width="5.69" height="5.69" fill="#3b82f5"/><rect x="70.69" y="81.56" width="5.69" height="5.69" fill="#3b82f5" fill-opacity="0.93"/><rect x="76.12" y="81.56" width="5.69" height="5.69" fill="#3b82f5" fill-opacity="0.35"/></g></svg><!--FAVE-->
<div class="a" style="left:1201px;top:790px;width:24px;height:24px;border-radius:50%;background:#fff;box-shadow:0 1px 6px rgba(0,0,0,0.12)"></div>
<svg class="a" style="left:1206px;top:795px" width="14" height="14" viewBox="0 0 14 14"><path d="M1.3 12.7L2.2 8.5L8.6 2.1Q9.3 1.4 10 2.1L11.9 4Q12.6 4.7 11.9 5.4L5.5 11.8Z" fill="#a3a8ad"/><path d="M7.2 3.6L10.4 6.8" stroke="#fff" stroke-width="0.8"/></svg>
<div class="t" style="left:1116px;top:922px;font-size:12px;color:#5f6670">Allowed file types: png, jpg, jpeg.</div>

<!-- enable pwa -->
<div class="t lbl" style="left:1469px;top:772.9px;font-size:13.3px">Enable PWA:</div>
<div class="a" style="left:1469px;top:803px;width:37px;height:22px;border-radius:11px;background:#4f46e5"></div>
<div class="a" style="left:1486.5px;top:805.5px;width:17px;height:17px;border-radius:50%;background:#fff"></div>

<!-- badge -->
<div class="a" style="left:1882px;top:914px;width:23px;height:29px;border-radius:5px;background:#45474b"></div>
<div class="t" style="left:1882px;top:922px;width:23px;text-align:center;font-family:'Liberation Serif',serif;font-weight:bold;font-size:12px;color:#fff">8</div>

<!-- floating widget -->
<div class="a" style="left:8px;top:890px;width:247px;height:45px;border-radius:9px;background:#eef1f5"></div>
<div class="t" style="left:68px;top:903px;font-size:13px;color:#777">n</div>
<div class="t" style="left:124px;top:903px;font-size:13px;color:#777">sc</div>
<div class="a" style="left:11.5px;top:877px;width:59px;height:59px;border-radius:50%;background:#fff;border:1px solid #ccc"></div>
<svg class="a" style="left:24px;top:887px" width="34" height="40" viewBox="0 0 34 40"><path d="M1.2 10.1L16.9 1.9L30.1 10.1V14.8L17.3 21.8V17.6L25.6 12.6L16.9 7.6L5.9 13.5V32.6L1.2 30.2Z" fill="#2d2d2d"/><path d="M8.4 14.2L13.8 12.4V33.3L27.5 27.4V21.7L32.8 19.2V29.5L16.9 38.2L8.4 33.4Z" fill="#f26522"/></svg>
<div class="a" style="left:77px;top:885px;width:49px;height:45px;border-radius:7px;background:#fff;border:1px solid #d6d6d6"></div>
<div class="t" style="left:86.5px;top:899px;font-size:14.5px;color:#222">Stop</div>
<div class="a" style="left:136px;top:885px;width:100px;height:45px;border-radius:7px;background:#fff;border:1px solid #d6d6d6"></div>
<div class="t" style="left:161px;top:899px;font-size:14.6px;color:#222">Discard</div>
<div class="a" style="left:246px;top:885px;width:38px;height:45px;border-radius:7px;background:#fff;border:1px solid #d6d6d6"></div>
<svg class="a" style="left:254px;top:896px" width="22" height="22" viewBox="0 0 22 22"><path d="M20 5.2H2.5M6.5 1.2L2.5 5.2L6.5 9.2M2 15.8H19.5M15.5 11.8L19.5 15.8L15.5 19.8" fill="none" stroke="#111" stroke-width="1.9"/></svg>


</div></body></html>
